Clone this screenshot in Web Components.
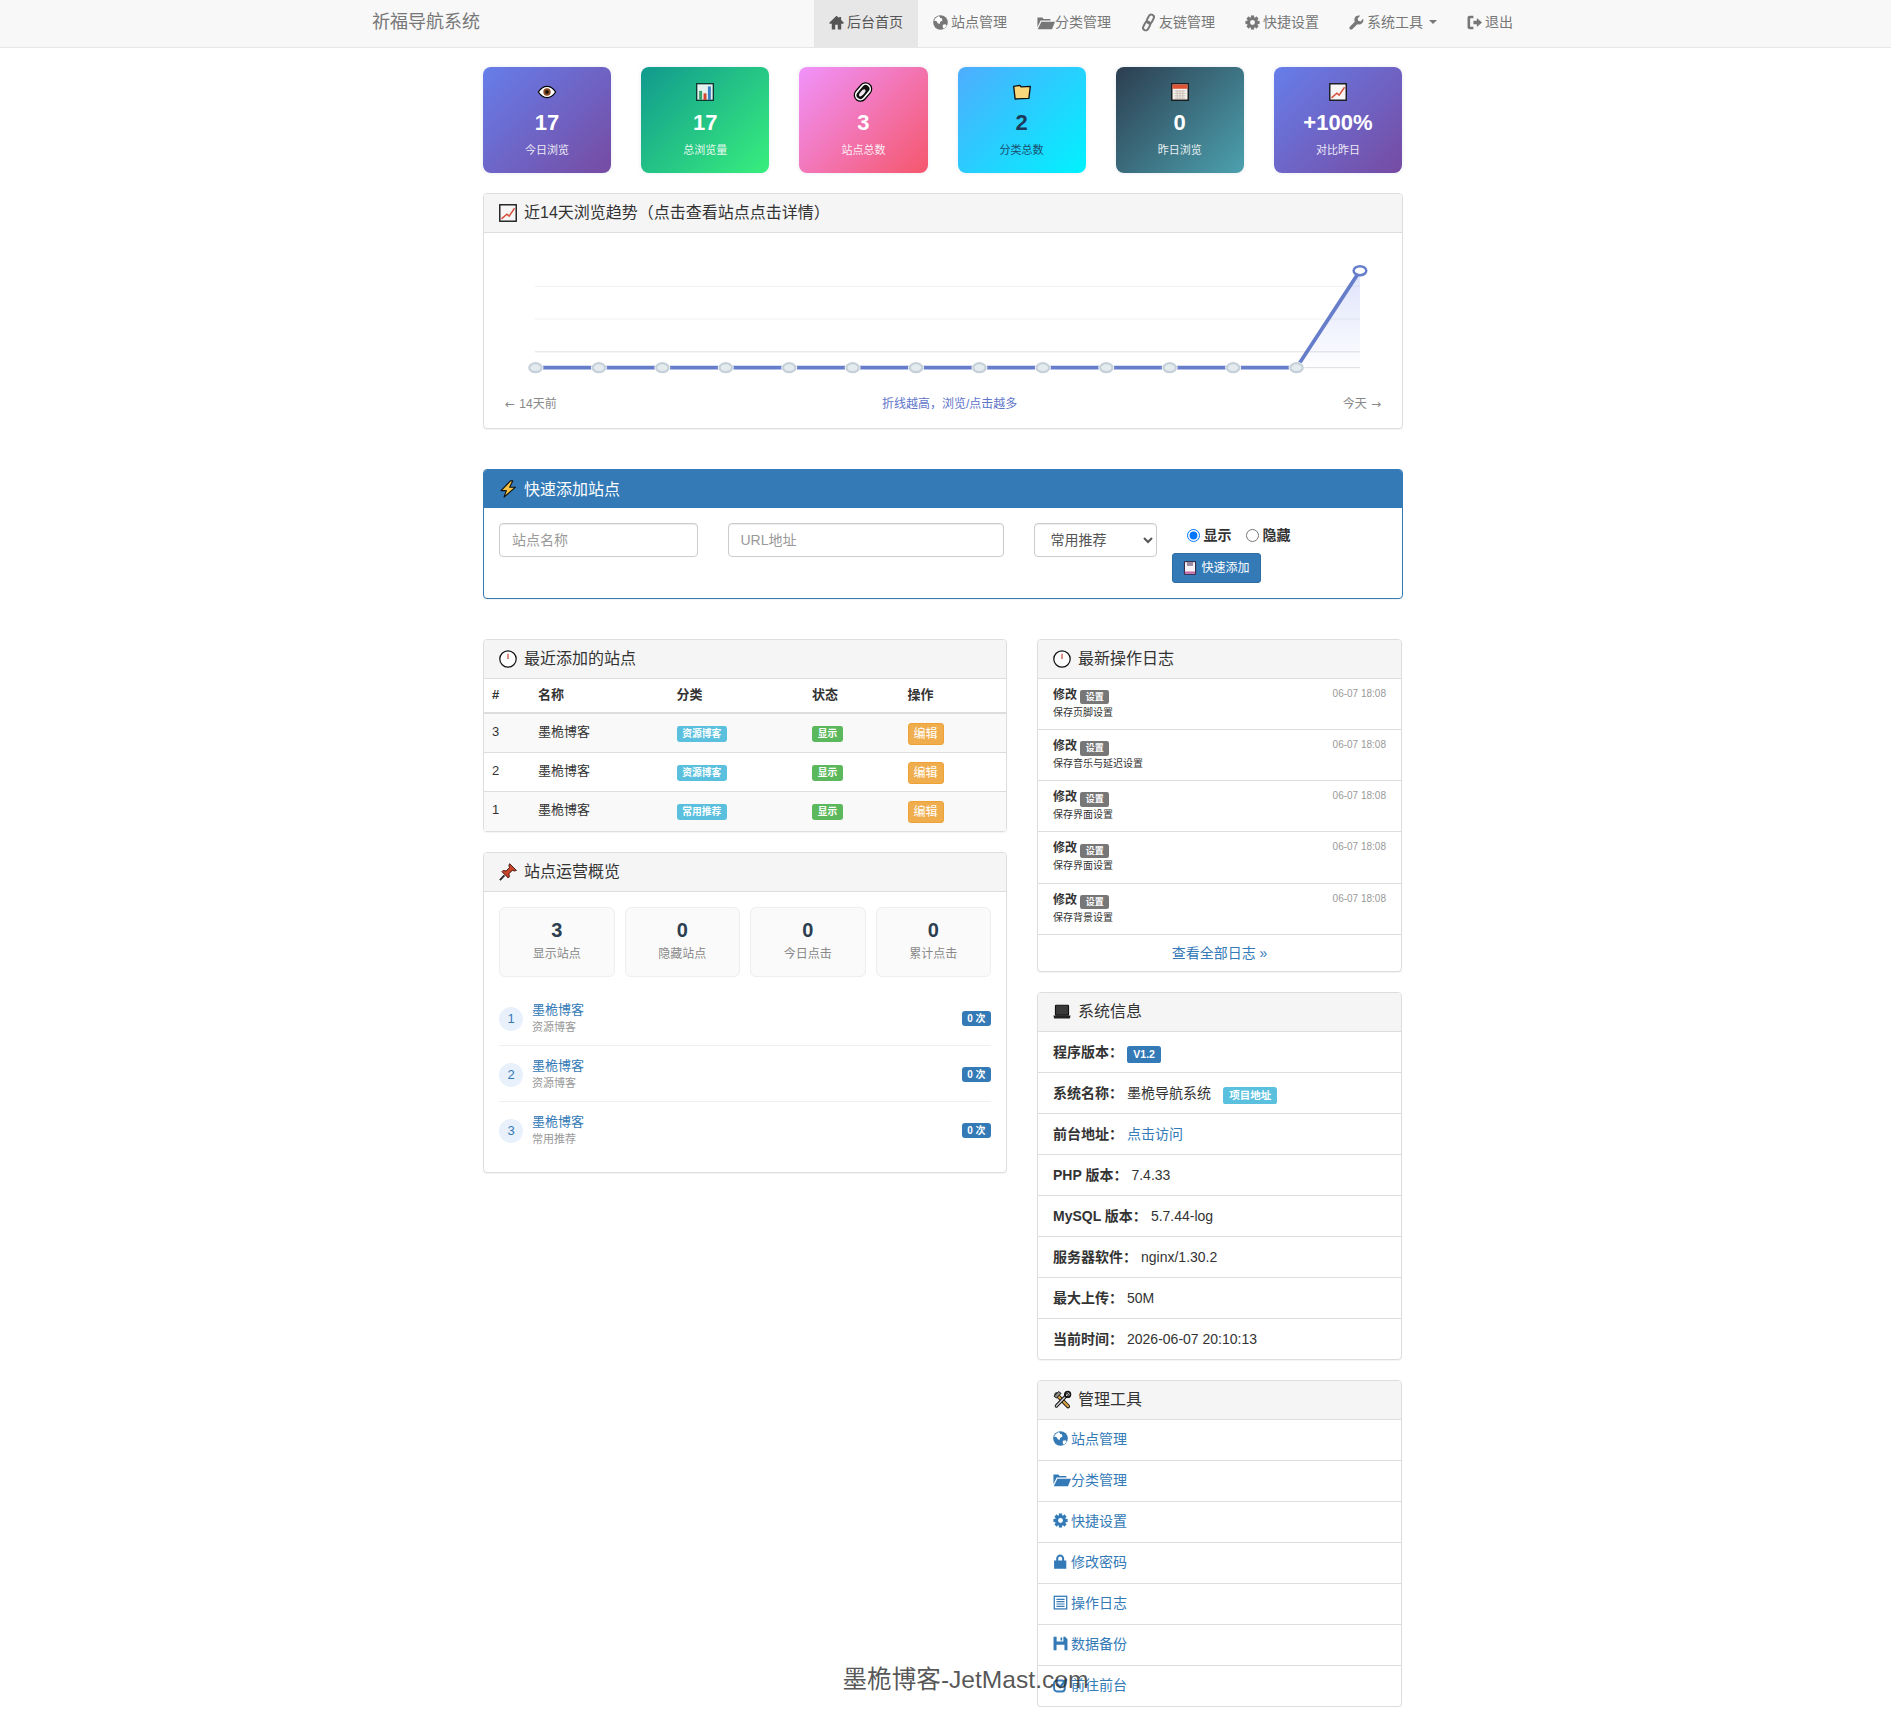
<!DOCTYPE html>
<html lang="zh-CN">
<head>
<meta charset="utf-8">
<title>祈福导航系统</title>
<style>
html,body{margin:0;padding:0;background:#fff}
body{font:14px/20px "Liberation Sans","Noto Sans CJK SC",sans-serif;color:#333}
</style>
</head>
<body>
<x-navbar></x-navbar>
<x-dashboard>
  <x-stat-row>
    <x-stat-card icon="e-eye" value="17" label="今日浏览" from="#667eea" to="#764ba2"></x-stat-card>
    <x-stat-card icon="e-bars" value="17" label="总浏览量" from="#11998e" to="#38ef7d"></x-stat-card>
    <x-stat-card icon="e-link" value="3" label="站点总数" from="#f093fb" to="#f5576c"></x-stat-card>
    <x-stat-card icon="e-folder" value="2" label="分类总数" from="#4facfe" to="#00f2fe" ink="#1c3a5a"></x-stat-card>
    <x-stat-card icon="e-cal" value="0" label="昨日浏览" from="#2c3e50" to="#4ca1af"></x-stat-card>
    <x-stat-card icon="e-trend" value="+100%" label="对比昨日" from="#667eea" to="#764ba2"></x-stat-card>
  </x-stat-row>
  <x-panel icon="e-trend" heading="近14天浏览趋势（点击查看站点点击详情）" style="margin-bottom:40.7px"><x-trend-chart></x-trend-chart></x-panel>
  <x-panel icon="e-bolt" heading="快速添加站点" tone="primary" style="margin-bottom:40px"><x-quick-form></x-quick-form></x-panel>
  <x-columns>
    <div slot="left">
      <x-panel icon="e-clock" heading="最近添加的站点"><x-recent-table></x-recent-table></x-panel>
      <x-panel icon="e-pin" heading="站点运营概览"><x-overview></x-overview></x-panel>
    </div>
    <div slot="right">
      <x-panel icon="e-clock" heading="最新操作日志"><x-log-list></x-log-list></x-panel>
      <x-panel icon="e-laptop" heading="系统信息"><x-sys-info></x-sys-info></x-panel>
      <x-panel icon="e-tools" heading="管理工具" style="margin-bottom:0"><x-tool-list></x-tool-list></x-panel>
    </div>
  </x-columns>
</x-dashboard>
<x-watermark>墨桅博客-JetMast.com</x-watermark>

<script>
const cogTeeth=[0,45,90,135,180,225,270,315].map(a=>`<rect x="5.5" y=".4" width="3" height="3" transform="rotate(${a} 7 7)" fill="currentColor"/>`).join('');
const GLYPHS={
 home:'<path fill="currentColor" d="M7 .6 0 7.400l.9.8H2.600v5.300h3.200V9.200h2.400v4.300h3.200V8.200h1.700l.9-.8L11.300 4.700V1.800H9.500v1.100z"/>',
 globe:'<circle cx="7" cy="7" r="6.800" fill="currentColor"/><path fill="#fff" d="M5.600 1C3.800 1.600 1.800 3.300 1.100 5.400l2.100.300 1.300 2.100 1.600.500.700-2.100 2-.900-.500-2.200-1.500-.300zM9.200 9.200l2.500-.500 1 1.200c-.6 1.300-1.500 2.200-2.600 2.900l-1-1.300z"/>',
 folder:'<path fill="currentColor" d="M.4 2.400h4.700l1 1.400H12.500v1.300H3.400L.4 11.400z"/><path fill="currentColor" d="M4.100 6.200h12.700L14 13.200H.7z"/>',
 link:'<g transform="rotate(-62 7 7)" fill="none" stroke="currentColor" stroke-width="1.800"><rect x="-1" y="4.500" width="8.600" height="5" rx="2.500"/><rect x="6.400" y="4.500" width="8.600" height="5" rx="2.500"/></g>',
 cog:cogTeeth+'<circle cx="7" cy="7" r="3.700" fill="none" stroke="currentColor" stroke-width="2.800"/>',
 wrench:'<path fill="currentColor" d="M13.200 3.600 10.800 6l-2.200-.6L8 3.200 10.400.8C8.600.2 6.600.8 5.600 2.400c-.8 1.300-.7 2.800-.2 3.900L.8 11c-.6.700-.6 1.600 0 2.200s1.500.6 2.200 0l4.700-4.600c1.500.6 3.300.3 4.500-.8 1.200-1.200 1.600-2.800 1-4.200z"/>',
 logout:'<path fill="currentColor" d="M6 .8H2.500C1.300.8.500 1.600.5 2.800v8.400c0 1.200.8 2 2 2H6v-2.200H2.900V3H6z"/><path fill="currentColor" d="M6 5.300h3.200V2.800L14 7l-4.800 4.200V8.700H6z"/>',
 lock:'<path fill="currentColor" fill-rule="evenodd" d="M3 6V4.200C3 2.200 4.800.5 6.700.5s3.700 1.700 3.700 3.700V6h2v7.700H1V6zm1.900 0h3.600V4.200c0-1-.8-1.800-1.800-1.800s-1.800.8-1.800 1.800z"/>',
 list:'<rect x="1.200" y="1.200" width="11.600" height="11.800" fill="none" stroke="currentColor" stroke-width="1.200"/><path stroke="currentColor" stroke-width="1.100" d="M3.200 4h7.600M3.200 6.200h7.600M3.200 8.400h7.600M3.200 10.600h7.600"/>',
 save:'<path fill="currentColor" fill-rule="evenodd" d="M.5 .8h2.900v4.400h6.300V.8h1.700l2.100 2.300V13.400H.5zM3.300 8.200v5.200h7.400V8.200zM7 1.400h1.600v2.700H7z"/>',
 share:'<rect x="1" y="3.200" width="10" height="10.300" rx="2.800" fill="none" stroke="currentColor" stroke-width="1.800"/><path d="M4 6.500l2.700 2.900L12.800 1.800" fill="none" stroke="currentColor" stroke-width="2.100"/>'
};
const EMOJI={
 'e-eye':'<path d="M.3 8C2.800 4.400 5.400 3 8 3s5.200 1.400 7.700 5C13.200 11.600 10.600 13 8 13S2.800 11.600.3 8z" fill="#fff" stroke="#000" stroke-width="1.100"/><circle cx="8" cy="8" r="3.300" fill="#8a4a22"/><circle cx="8" cy="8" r="1.500" fill="#111"/>',
 'e-bars':'<rect x=".6" y=".6" width="14.800" height="14.800" fill="#e4f2ef" stroke="#0c3a33" stroke-width="1.200"/><rect x="2.800" y="7" width="2.600" height="8" fill="#38a169"/><rect x="6.700" y="9.200" width="2.600" height="5.800" fill="#d6452f"/><rect x="10.600" y="3" width="2.600" height="12" fill="#3b7fc4"/>',
 'e-link':'<g transform="rotate(-50 8 8)"><rect x="-1" y="2.600" width="18" height="10.800" rx="5.400" fill="#fff" stroke="#000" stroke-width="1.100"/><rect x="1" y="4.600" width="14" height="6.800" rx="3.400" fill="#111"/><ellipse cx="7" cy="8" rx="3.900" ry="1.700" fill="#f2e6ee"/></g>',
 'e-folder':'<path d="M.6 3 6.200 2.100l1 1.400 8.200-.5-1.300 10.700-12.200.5z" fill="#fbd77c" stroke="#111" stroke-width="1.200" stroke-linejoin="round"/>',
 'e-cal':'<rect x=".7" y=".7" width="14.600" height="14.600" fill="#f4f1ec" stroke="#111" stroke-width="1.200"/><rect x="1.300" y="1.300" width="13.400" height="3.800" fill="#dd5233"/><path stroke="#c6b9b0" stroke-width=".7" d="M3 7.200h10M3 9.300h10M3 11.400h10M3 13.500h10M5.500 6.200v8M8 6.200v8M10.500 6.200v8"/>',
 'e-trend':'<rect x=".7" y=".7" width="14.600" height="14.600" fill="#f7f5f5" stroke="#111" stroke-width="1.200"/><path d="M2.200 13.200 7 9l2 1.800 4.800-7" fill="none" stroke="#d9503d" stroke-width="1.300"/>',
 'e-bolt':'<path d="M10.200 .8 1.800 9.400h4.700L4.500 15.200 14.600 6.400H9.500L12.200.8z" fill="#f5c243" stroke="#111" stroke-width="1" stroke-linejoin="round"/>',
 'e-clock':'<circle cx="8" cy="8" r="7.300" fill="#fdfdfd" stroke="#111" stroke-width="1.100"/><path d="M8 3.400V8" stroke="#c0392b" stroke-width="1"/>',
 'e-pin':'<path d="M9.500 .6 15.500 6.600l-1.700.5-2-.5-3 3 .5 2.600-1.100 1.100-5.600-5.600 1.100-1.100 2.600.5 3-3-.5-2z" fill="#c8442a" stroke="#3a120a" stroke-width=".8" stroke-linejoin="round"/><path d="M4.800 11 .8 15.200" stroke="#222" stroke-width="1.600"/>',
 'e-laptop':'<rect x="2.200" y="2" width="11.600" height="8.800" rx=".6" fill="#3a3a3a" stroke="#111"/><path d="M.4 11.200h15.200l-.6 2.600H1z" fill="#222"/>',
 'e-tools':'<path d="M3 3 13.400 13.600" stroke="#111" stroke-width="3.600" stroke-linecap="round"/><path d="M3 3 13.400 13.600" stroke="#d9a441" stroke-width="2" stroke-linecap="round"/><path d="M12.600 3.300 3 13.300" stroke="#111" stroke-width="3" stroke-linecap="round"/><path d="M12.600 3.300 3 13.300" stroke="#cfd3d6" stroke-width="1.300" stroke-linecap="round"/><path d="M.8 4.600 5 .5l2.200 1.600-4 4.200z" fill="#888" stroke="#111" stroke-width=".8"/><circle cx="13" cy="3" r="2.500" fill="none" stroke="#111" stroke-width="1.500"/>',
 'e-disk':'<path d="M1.600 .8h12.800v14.400H1.600z" fill="#f7f3f6" stroke="#2b1533" stroke-width="1.100"/><rect x="2.200" y="12" width="11.600" height="2.600" fill="#c26aa8"/><rect x="4.500" y="1.200" width="7" height="4.400" fill="#9a8aa0"/>'
};
function define(name,css,render){
  customElements.define(name,class extends HTMLElement{
    connectedCallback(){
      if(this.shadowRoot)return;
      const root=this.attachShadow({mode:'open'});
      root.innerHTML=`<style>${css}</style>`+render(this);
    }
  });
}

define('x-icon',`
  :host{display:inline-block;flex:none;line-height:0}
  svg{display:block;overflow:visible;width:100%;height:100%}
`,el=>{
  const n=el.getAttribute('name');const s=el.getAttribute('size')||(n.startsWith('e-')?18:15);
  el.style.width=s+'px';el.style.height=s+'px';
  return n.startsWith('e-')?`<svg viewBox="0 0 16 16">${EMOJI[n]}</svg>`:`<svg viewBox="0 0 14 14">${GLYPHS[n]}</svg>`;
});

define('x-navbar',`
  :host{display:flex;height:47px;background:#f8f8f8;border-bottom:1px solid #e7e7e7;padding-left:372px;align-items:stretch;box-sizing:content-box}
  .brand{font-size:18px;line-height:44px;color:#777;width:108px;flex:none;white-space:nowrap}
  nav{display:flex;margin-left:334px}
  a{display:flex;align-items:center;padding:0 15px 3px;color:#777;text-decoration:none;white-space:nowrap}
  a.on{background:#e7e7e7;color:#555}
  x-icon{margin-right:3px}
  .caret{width:0;height:0;border:4px solid transparent;border-top-color:currentColor;border-bottom:0;margin-left:6px}
`,()=>{
  const items=[['home','后台首页',1],['globe','站点管理'],['folder','分类管理'],['link','友链管理'],['cog','快捷设置'],['wrench','系统工具',0,1],['logout','退出']];
  return `<div class="brand">祈福导航系统</div><nav>`+items.map(i=>`<a href="#" class="${i[2]?'on':''}"><x-icon name="${i[0]}"></x-icon>${i[1]}${i[3]?'<span class="caret"></span>':''}</a>`).join('')+`</nav>`;
});

define('x-dashboard',`:host{display:block;width:920px;margin-left:483px;padding-top:19px}`,()=>`<slot></slot>`);
define('x-stat-row',`:host{display:grid;grid-template-columns:repeat(6,1fr);column-gap:30px;margin-bottom:20px;width:919px}`,()=>`<slot></slot>`);
define('x-stat-card',`
  :host{display:block;border-radius:8px;padding:15px 10px 15.700px;text-align:center;color:#fff;box-shadow:0 0 4px rgba(120,140,180,.18)}
  .ic{height:20px;display:flex;justify-content:center;align-items:center}
  .v{font-size:22px;line-height:26px;font-weight:700;margin-top:8px}
  .l{font-size:11px;line-height:14px;margin-top:7px;opacity:.88}
`,el=>{
  const a=n=>el.getAttribute(n);
  el.style.background=`linear-gradient(135deg,${a('from')},${a('to')})`;
  if(a('ink'))el.style.color=a('ink');
  return `<div class="ic"><x-icon name="${a('icon')}" size="18"></x-icon></div><div class="v">${a('value')}</div><div class="l">${a('label')}</div>`;
});

define('x-panel',`
  :host{display:block;background:#fff;border:1px solid #ddd;border-radius:4px;margin-bottom:20px;box-shadow:0 1px 1px rgba(0,0,0,.05)}
  header{display:flex;align-items:center;padding:10px 15px;background:#f5f5f5;border-bottom:1px solid #ddd;border-radius:3px 3px 0 0;font-size:16px;line-height:17.600px;color:#333}
  header x-icon{margin-right:7px}
  :host([tone="primary"]){border-color:#337ab7}
  :host([tone="primary"]) header{background:#337ab7;border-color:#337ab7;color:#fff;padding-bottom:9px}
`,el=>`<header><x-icon name="${el.getAttribute('icon')}" size="18"></x-icon><span>${el.getAttribute('heading')}</span></header><slot></slot>`);

define('x-trend-chart',`
  :host{display:block}
  svg{display:block;width:918px;height:159px}
  .foot{display:flex;justify-content:space-between;font-size:12px;line-height:17px;padding:4px 20px 15px;color:#888}
  .mid{color:#5e74c9}
  i{font:normal 12px/17px "DejaVu Sans",sans-serif;display:inline-block;width:12px;text-align:center}
`,()=>{
  const xs=[...Array(14)].map((_,i)=>51.5+63.42*i);
  const base=134.7,top=37.7;
  const dots=xs.slice(0,13).map(x=>`<ellipse cx="${x}" cy="${base}" rx="8" ry="6" fill="#fff"/><ellipse cx="${x}" cy="${base}" rx="6.200" ry="4.500" fill="#e4ebef" stroke="#c6d0d8" stroke-width="2.200"/>`).join('');
  return `<svg viewBox="0 0 918 159">
    <defs><linearGradient id="g" x1="0" y1="0" x2="0" y2="1"><stop offset="0" stop-color="#667eea" stop-opacity=".22"/><stop offset="1" stop-color="#667eea" stop-opacity=".01"/></linearGradient></defs>
    <path d="M51 53.300H876M51 86H876" stroke="#f0f0f0" stroke-width="1"/>
    <path d="M51 118.700H876" stroke="#eaeaea" stroke-width="1.500"/>
    <path d="M51 134.700H876" stroke="#ddd" stroke-width="1"/>
    <path d="M${xs[12]} ${base}L${xs[13]} ${top}V${base}z" fill="url(#g)"/>
    <path d="M${xs[0]} ${base}H${xs[12]}L${xs[13]} ${top}" fill="none" stroke="#667eca" stroke-width="3.800"/>
    ${dots}
    <ellipse cx="${xs[13]}" cy="${top}" rx="6.300" ry="4.500" fill="#fff" stroke="#667eca" stroke-width="2.500"/>
  </svg><div class="foot"><span><i>←</i> 14天前</span><span class="mid">折线越高，浏览/点击越多</span><span>今天 <i>→</i></span></div>`;
});

define('x-quick-form',`
  :host{display:flex;align-items:flex-start;gap:30px;padding:15px}
  input[type=text],select{box-sizing:border-box;height:34px;border:1px solid #ccc;border-radius:4px;font:14px/20px "Liberation Sans","Noto Sans CJK SC",sans-serif;color:#555;background:#fff;padding:6px 12px;box-shadow:inset 0 1px 1px rgba(0,0,0,.075);margin:0}
  input::placeholder{color:#999;opacity:1}
  .n{width:198.500px}.u{width:276px}select{width:123px}
  .c{margin-left:-15px}
  .r{display:flex;align-items:center;font-weight:700;line-height:20px;margin:2px 0 0 15px}
  .r input{margin:0 4px 0 0;width:13px;height:13px}
  .r label{display:flex;align-items:center;margin-right:14px}
  button{display:flex;align-items:center;height:30px;margin-top:7.400px;box-sizing:border-box;padding:0 10px;border:1px solid #2e6da4;border-radius:3px;background:#337ab7;color:#fff;font:12px/18px "Liberation Sans","Noto Sans CJK SC",sans-serif}
  button x-icon{margin-right:5px}
`,()=>`
  <input class="n" type="text" placeholder="站点名称"><input class="u" type="text" placeholder="URL地址">
  <select><option>常用推荐</option><option>资源博客</option></select>
  <div class="c"><div class="r"><label><input type="radio" name="s" checked>显示</label><label><input type="radio" name="s">隐藏</label></div>
  <button type="button"><x-icon name="e-disk" size="14"></x-icon>快速添加</button></div>`);

define('x-label',`
  :host{display:inline;padding:.2em .6em .3em;font-size:75%;font-weight:700;line-height:1;color:#fff;border-radius:.25em;white-space:nowrap;background:var(--c,#777);vertical-align:-1px}
`,el=>{const m={info:'#5bc0de',success:'#5cb85c',primary:'#337ab7',default:'#777'};el.style.setProperty('--c',m[el.getAttribute('tone')]||'#777');return '<slot></slot>';});

define('x-recent-table',`
  :host{display:block;font-size:13px}
  table{width:100%;border-collapse:separate;border-spacing:0;table-layout:fixed}
  th{text-align:left;padding:7px 8px 9px;line-height:17px;border-bottom:2px solid #ddd;font-weight:700}
  td{padding:8px;line-height:19px;vertical-align:top;border-bottom:1px solid #ddd}
  tr.alt td{background:#f9f9f9}
  tr:last-child td{border-bottom:0;padding-bottom:9px}
  .b{display:block;width:36px;height:22px;box-sizing:border-box;text-align:center;font-size:12px;line-height:20px;color:#fff;background:#f0ad4e;border:1px solid #eea236;border-radius:3px;margin:1px 0 -1px}
`,()=>{
  const rows=[['3','资源博客'],['2','资源博客'],['1','常用推荐']];
  return `<table><colgroup><col style="width:46px"><col style="width:138.500px"><col style="width:135.500px"><col style="width:95.500px"><col></colgroup>
  <thead><tr><th>#</th><th>名称</th><th>分类</th><th>状态</th><th>操作</th></tr></thead><tbody>`+
  rows.map((r,i)=>`<tr class="${i%2?'':'alt'}"><td>${r[0]}</td><td>墨桅博客</td><td><x-label tone="info">${r[1]}</x-label></td><td><x-label tone="success">显示</x-label></td><td><span class="b">编辑</span></td></tr>`).join('')+`</tbody></table>`;
});

define('x-overview',`
  :host{display:block;padding:15px}
  .st{display:grid;grid-template-columns:repeat(4,1fr);gap:10px;margin-bottom:13px}
  .s{height:70px;box-sizing:border-box;background:#fafafa;border:1px solid #eee;border-radius:6px;text-align:center;padding-top:10px}
  .s b{display:block;font-size:20px;line-height:24px;color:#2c3e50}
  .s span{display:block;font-size:12px;line-height:17px;margin-top:4px;color:#888}
  .row{display:flex;align-items:center;padding:11.500px 0 8.500px;border-bottom:1px solid #eee}
  .row:last-child{border-bottom:0}
  .n{width:24px;height:24px;border-radius:50%;background:#e8f1fb;color:#337ab7;text-align:center;line-height:24px;font-size:13px;margin-right:9px;flex:none}
  .t{flex:1;line-height:17.500px}
  .t a{display:block;font-size:13px;color:#337ab7;text-decoration:none}
  .t small{display:block;font-size:11px;color:#999}
  .c{background:#337ab7;color:#fff;font-size:10px;font-weight:700;line-height:15px;padding:0 5.500px;border-radius:3px;white-space:nowrap}
`,()=>{
  const st=[['3','显示站点'],['0','隐藏站点'],['0','今日点击'],['0','累计点击']];
  const rows=[['1','资源博客'],['2','资源博客'],['3','常用推荐']];
  return `<div class="st">`+st.map(s=>`<div class="s"><b>${s[0]}</b><span>${s[1]}</span></div>`).join('')+`</div>`+
  rows.map(r=>`<div class="row"><span class="n">${r[0]}</span><div class="t"><a href="#">墨桅博客</a><small>${r[1]}</small></div><span class="c">0 次</span></div>`).join('');
});

define('x-log-list',`
  :host{display:block}
  .r{height:51.200px;box-sizing:border-box;padding:8px 15px;border-bottom:1px solid #ddd}
  .a{display:flex;justify-content:space-between;line-height:16px;font-size:12px}
  .a b x-label{font-size:9px}
  .a span{font-size:10px;color:#999;line-height:14px}
  .d{font-size:10px;line-height:16px;margin-top:2px}
  .more{display:block;height:36px;line-height:36px;text-align:center;font-size:14px;color:#337ab7;text-decoration:none}
`,()=>['保存页脚设置','保存音乐与延迟设置','保存界面设置','保存界面设置','保存背景设置'].map(t=>`<div class="r"><div class="a"><b>修改 <x-label>设置</x-label></b><span>06-07 18:08</span></div><div class="d">${t}</div></div>`).join('')+`<a class="more" href="#">查看全部日志 »</a>`);

define('x-sys-info',`
  :host{display:block}
  div{padding:10px 15px;line-height:20px;border-bottom:1px solid #ddd}
  div:last-child{border-bottom:0}
  a{color:#337ab7;text-decoration:none}
  x-label{margin-left:8px}
  b{margin-right:4px}
`,()=>`
  <div><b>程序版本：</b><x-label tone="primary" style="margin-left:0">V1.2</x-label></div>
  <div><b>系统名称：</b>墨桅导航系统 <x-label tone="info">项目地址</x-label></div>
  <div><b>前台地址：</b><a href="#">点击访问</a></div>
  <div><b>PHP 版本：</b>7.4.33</div>
  <div><b>MySQL 版本：</b>5.7.44-log</div>
  <div><b>服务器软件：</b>nginx/1.30.2</div>
  <div><b>最大上传：</b>50M</div>
  <div><b>当前时间：</b>2026-06-07 20:10:13</div>`);

define('x-tool-list',`
  :host{display:block}
  a{display:flex;align-items:center;padding:9px 15px 11px;line-height:20px;color:#337ab7;text-decoration:none;border-bottom:1px solid #ddd}
  a:last-child{border-bottom:0}
  x-icon{margin-right:3px}
`,()=>[['globe','站点管理'],['folder','分类管理'],['cog','快捷设置'],['lock','修改密码'],['list','操作日志'],['save','数据备份'],['share','前往前台']].map(i=>`<a href="#"><x-icon name="${i[0]}"></x-icon>${i[1]}</a>`).join(''));

define('x-columns',`
  :host{display:grid;grid-template-columns:524px 365px;column-gap:30px;align-items:start}
`,()=>`<slot name="left"></slot><slot name="right"></slot>`);

define('x-watermark',`
  :host{position:absolute;left:842.500px;top:1664px;font-size:24.600px;line-height:32px;color:rgba(40,40,40,.78);white-space:nowrap}
`,()=>`<slot></slot>`);
</script>
</body>
</html>
